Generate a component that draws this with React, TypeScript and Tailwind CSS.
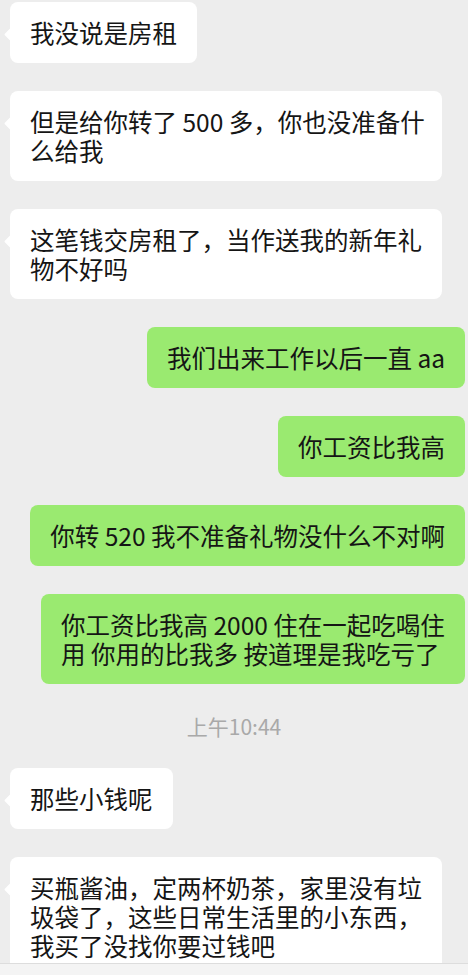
import type { FC } from 'react';

type Msg =
    | { kind: 'in' | 'out'; lines: string[]; width?: string }
    | { kind: 'time'; text: string };

const messages: Msg[] = [
    { kind: 'in', lines: ['我没说是房租'] },
    { kind: 'in', lines: ['但是给你转了 500 多，你也没准备什', '么给我'], width: 'w-[432px]' },
    { kind: 'in', lines: ['这笔钱交房租了，当作送我的新年礼', '物不好吗'], width: 'w-[432px]' },
    { kind: 'out', lines: ['我们出来工作以后一直 aa'] },
    { kind: 'out', lines: ['你工资比我高'] },
    { kind: 'out', lines: ['你转 520 我不准备礼物没什么不对啊'] },
    { kind: 'out', lines: ['你工资比我高 2000 住在一起吃喝住', '用 你用的比我多 按道理是我吃亏了'], width: 'w-[424px]' },
    { kind: 'time', text: '上午10:44' },
    { kind: 'in', lines: ['那些小钱呢'] },
    {
        kind: 'in',
        lines: ['买瓶酱油，定两杯奶茶，家里没有垃', '圾袋了，这些日常生活里的小东西，', '我买了没找你要过钱吧'],
        width: 'w-[432px]',
    },
];

const Bubble: FC<{ kind: 'in' | 'out'; lines: string[]; width?: string }> = ({ kind, lines, width }) => {
    const isIn = kind === 'in';

    return (
        <div
            className={`relative shrink-0 rounded-[8px] px-5 py-4 text-[24.5px] leading-[29px] text-[#151515] ${
                isIn ? 'ml-[10px] self-start bg-white' : 'mr-[3px] self-end bg-[#9aea70]'
            } ${width ?? 'w-fit'}`}
        >
            {isIn && (
                <div className="absolute left-[-4px] top-[28px] h-[9px] w-[9px] rotate-45 rounded-[1px] bg-white" />
            )}
            {lines.map((line) => (
                <div key={line} className="whitespace-nowrap">
                    {line}
                </div>
            ))}
        </div>
    );
};

export default function App() {
    return (
        <div
            className="flex h-[975px] w-[468px] flex-col overflow-hidden bg-[#ededed]"
            style={{ fontFamily: '"Noto Sans CJK SC", "Noto Sans", sans-serif' }}
        >
            <div className="flex min-h-0 flex-1 flex-col gap-[28px] overflow-hidden pt-[2px]">
                {messages.map((m, i) =>
                    m.kind === 'time' ? (
                        <div
                            key={i}
                            className="shrink-0 text-center text-[21px] leading-[28px] text-[#a9a9a9]"
                        >
                            {m.text}
                        </div>
                    ) : (
                        <Bubble key={i} kind={m.kind} lines={m.lines} width={m.width} />
                    ),
                )}
            </div>
            <div className="h-[12px] shrink-0 border-t border-[#dddddd] bg-[#f4f4f4]" />
        </div>
    );
}
